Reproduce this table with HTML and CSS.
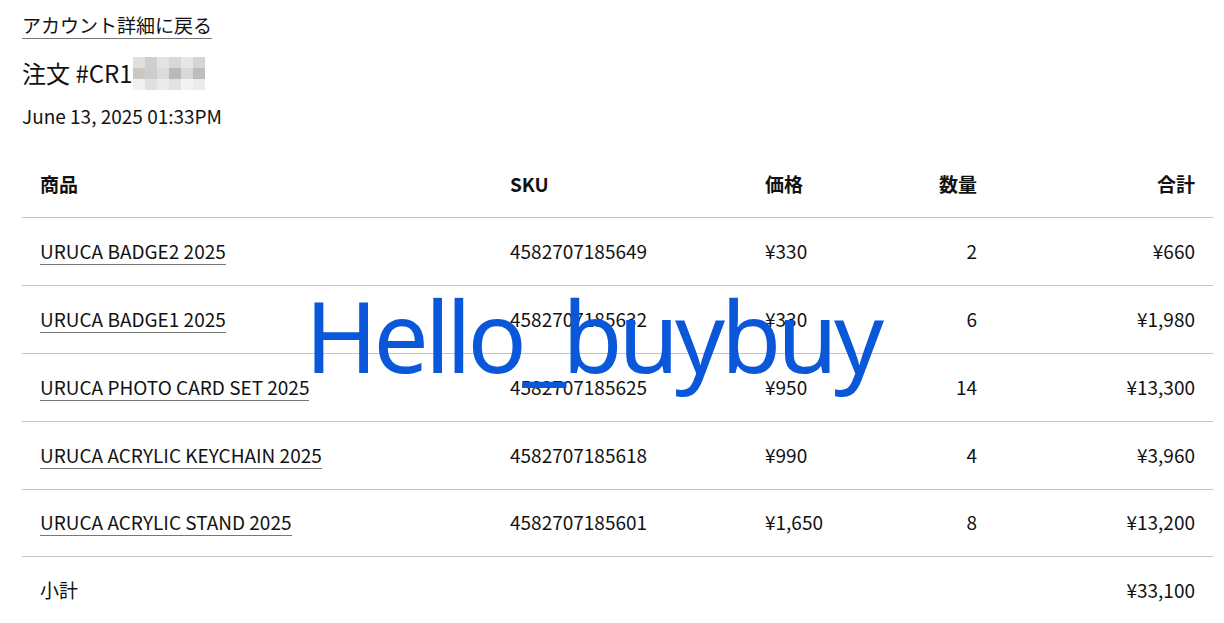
FILE: index.html
```html
<!DOCTYPE html>
<html lang="ja">
<head>
  <meta charset="UTF-8" />
  <title>注文詳細</title>
  <link rel="stylesheet" href="styles.css">
</head>
<body>

  <div class="page">
    <a class="back-link" href="#">アカウント詳細に戻る</a>

    <h1 class="order-title">注文 #CR1<span class="mosaic">
      <i style="background:#e0e0e0"></i><i style="background:#cfcfcf"></i><i style="background:#e3e3e3"></i><i style="background:#d8d8d8"></i><i style="background:#e6e6e6"></i><i style="background:#d5d5d5"></i>
      <i style="background:#cbc8c4"></i><i style="background:#cdcdcd"></i><i style="background:#dcdcdc"></i><i style="background:#b9b9b9"></i><i style="background:#d8d8d8"></i><i style="background:#bdbdbd"></i>
      <i style="background:#f0f0f0"></i><i style="background:#e0e0e0"></i><i style="background:#ebebeb"></i><i style="background:#e2e2e2"></i><i style="background:#f3f3f3"></i><i style="background:#ececec"></i>
    </span></h1>

    <p class="order-date">June 13, 2025 01:33PM</p>

    <table class="order-table">
      <thead>
        <tr>
          <th class="col-product">商品</th>
          <th class="col-sku">SKU</th>
          <th class="col-price">価格</th>
          <th class="col-qty">数量</th>
          <th class="col-total">合計</th>
        </tr>
      </thead>
      <tbody>
        <tr>
          <td><a href="#">URUCA BADGE2 2025</a></td>
          <td>4582707185649</td>
          <td>¥330</td>
          <td class="col-qty">2</td>
          <td class="col-total">¥660</td>
        </tr>
        <tr>
          <td><a href="#">URUCA BADGE1 2025</a></td>
          <td>4582707185632</td>
          <td>¥330</td>
          <td class="col-qty">6</td>
          <td class="col-total">¥1,980</td>
        </tr>
        <tr>
          <td><a href="#">URUCA PHOTO CARD SET 2025</a></td>
          <td>4582707185625</td>
          <td>¥950</td>
          <td class="col-qty">14</td>
          <td class="col-total">¥13,300</td>
        </tr>
        <tr>
          <td><a href="#">URUCA ACRYLIC KEYCHAIN 2025</a></td>
          <td>4582707185618</td>
          <td>¥990</td>
          <td class="col-qty">4</td>
          <td class="col-total">¥3,960</td>
        </tr>
        <tr>
          <td><a href="#">URUCA ACRYLIC STAND 2025</a></td>
          <td>4582707185601</td>
          <td>¥1,650</td>
          <td class="col-qty">8</td>
          <td class="col-total">¥13,200</td>
        </tr>
      </tbody>
      <tfoot>
        <tr>
          <td colspan="4">小計</td>
          <td class="col-total">¥33,100</td>
        </tr>
      </tfoot>
    </table>
  </div>

  <!-- watermark over the table -->
  <div class="watermark">Hello_buybuy</div>

</body>
</html>
```

FILE: styles.css
```css
body {
  font-family: "Noto Sans CJK JP", "Noto Sans", sans-serif;
  background-color: #fff;
  color: #121212;
  margin: 0;
  padding: 0;
}

.page {
  padding: 12px 11px 0 22px;
}

.back-link {
  display: inline-block;
  font-size: 19px;
  line-height: 26px;
  color: #121212;
  text-decoration: none;
  border-bottom: 1px solid #777;
}

.order-title {
  display: flex;
  align-items: center;
  margin: 17px 0 0;
  font-size: 24px;
  font-weight: 400;
  line-height: 34px;
  height: 34px;
}

.mosaic {
  display: grid;
  grid-template-columns: repeat(6, 12px);
  grid-template-rows: repeat(3, 11px);
}

.mosaic i {
  display: block;
}

.order-date {
  margin: 13px 0 0;
  font-size: 19px;
  line-height: 26px;
  color: #121212;
}

.order-table {
  width: 100%;
  table-layout: fixed;
  margin-top: 22px;
  border-collapse: collapse;
  font-size: 19px;
}

.order-table th,
.order-table td {
  height: 64px;
  padding: 0 18px 3px;
  text-align: left;
  vertical-align: middle;
  border-bottom: 1px solid #c4c4c4;
}

.order-table th {
  font-weight: 700;
  height: 64px;
  padding-bottom: 2px;
}

.order-table tbody tr:last-child td {
  height: 63px;
}

.order-table tfoot td {
  border-bottom: none;
}

.order-table td a {
  color: #121212;
  text-decoration: none;
  border-bottom: 1px solid #777;
}

/* widths are content widths, 36px padding is added to each */
.col-product { width: 434px; }
.col-sku { width: 219px; }
.col-price { width: 92px; }
.order-table .col-qty { text-align: right; width: 84px; }
.order-table .col-total { text-align: right; }

.watermark {
  position: absolute;
  left: 305px;
  top: 270px;
  font-family: "Noto Sans", sans-serif;
  font-size: 98px;
  line-height: 130px;
  letter-spacing: -4px;
  color: #0b57d9;
  white-space: nowrap;
  pointer-events: none;
}
```
